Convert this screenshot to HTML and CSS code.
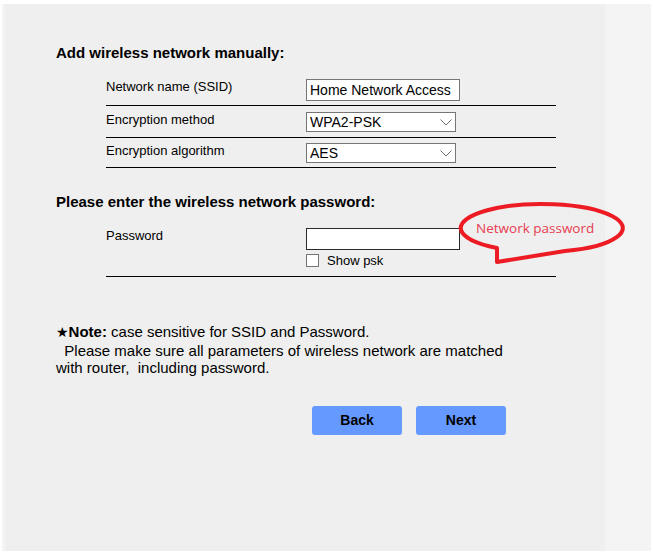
FILE: index.html
```html
<!DOCTYPE html>
<html>
<head>
<meta charset="utf-8">
<link rel="stylesheet" href="styles.css">
</head>
<body>
<div class="frame">
  <div class="main">
    <h1 class="title">Add wireless network manually:</h1>
    <div class="table">
      <div class="row r1">
        <div class="label">Network name (SSID)</div>
        <div class="ctrl"><input class="text" type="text" value="Home Network Access"></div>
      </div>
      <div class="row r2">
        <div class="label">Encryption method</div>
        <div class="ctrl"><select class="sel"><option>WPA2-PSK</option></select></div>
      </div>
      <div class="row r3">
        <div class="label">Encryption algorithm</div>
        <div class="ctrl"><select class="sel"><option>AES</option></select></div>
      </div>
    </div>
    <h2 class="title t2">Please enter the wireless network password:</h2>
    <div class="table">
      <div class="row r4">
        <div class="label">Password</div>
        <div class="ctrl stack">
          <input class="text dark" type="password">
          <label class="show"><input class="check" type="checkbox"><span>Show psk</span></label>
        </div>
      </div>
    </div>
    <svg class="callout" width="175" height="70" viewBox="0 0 175 70">
      <path d="M41 50 L41 64 L109 53 A81 24 0 1 0 41 50 Z" fill="none" stroke="#ed1c24" stroke-width="4" stroke-linejoin="round"/>
    </svg>
    <div class="callout-text">Network password</div>
    <p class="note"><span class="star">★</span><b>Note:</b> case sensitive for SSID and Password.<br>&nbsp;&nbsp;Please make sure all parameters of wireless network are matched<br>with router,&nbsp; including password.</p>
    <div class="buttons">
      <button class="btn">Back</button>
      <button class="btn">Next</button>
    </div>
  </div>
  <div class="side"></div>
</div>
</body>
</html>
```
FILE: styles.css
```css
html, body {
  margin: 0;
  padding: 0;
  background: #ffffff;
}
body {
  font-family: "Liberation Sans", Arial, sans-serif;
  color: #000;
}
.frame {
  display: flex;
  margin: 4px 2px 2px 2px;
  height: 547px;
}
.main {
  position: relative;
  flex: 1;
  background: #efefef;
  border-left: 3px solid #f4f4f4;
  padding: 40px 0 0 51px;
  box-sizing: border-box;
}
.side {
  width: 46px;
  background: #f4f4f4;
}
.title {
  margin: 0;
  font-size: 15px;
  line-height: 18px;
  font-weight: bold;
}
.t2 {
  margin-top: 25px;
}
.table {
  margin-left: 50px;
  width: 450px;
  margin-top: 17px;
}
.row {
  display: grid;
  grid-template-columns: 200px 1fr;
  border-bottom: 1px solid #000;
}
.r1 { padding: 0 0 4px; }
.r2 { padding: 6px 0 5px; }
.r3 { padding: 5px 0 4px; }
.r4 { padding: 0 0 8px; }
.t2 + .table { margin-top: 17px; }
.label {
  font-size: 13px;
  line-height: 15px;
  padding-top: 0;
}
.ctrl {
  display: flex;
}
.stack {
  flex-direction: column;
  align-items: flex-start;
}
.text {
  box-sizing: border-box;
  width: 154px;
  height: 22px;
  margin: 0;
  padding: 0 3px;
  border: 1px solid #767676;
  background: #fff;
  font-family: "Liberation Sans", Arial, sans-serif;
  font-size: 14px;
  color: #000;
  outline: none;
}
.dark {
  border-color: #2a2a2a;
}
.sel {
  box-sizing: border-box;
  width: 150px;
  height: 20px;
  margin: 0;
  padding: 0 0 0 3px;
  border: 1px solid #767676;
  border-radius: 0;
  background: #fff url("data:image/svg+xml,%3Csvg xmlns='http://www.w3.org/2000/svg' width='12' height='7'%3E%3Cpath d='M0.5 0.5 L6 6 L11.5 0.5' fill='none' stroke='%23707070' stroke-width='1'/%3E%3C/svg%3E") no-repeat right 3px center;
  -webkit-appearance: none;
  appearance: none;
  font-family: "Liberation Sans", Arial, sans-serif;
  font-size: 14px;
  line-height: 18px;
  color: #000;
}
.show {
  display: flex;
  align-items: center;
  margin-top: 3px;
  font-size: 13px;
  line-height: 15px;
}
.check {
  -webkit-appearance: none;
  appearance: none;
  box-sizing: border-box;
  width: 13px;
  height: 13px;
  margin: 0 8px 0 0;
  border: 1px solid #767676;
  background: #fff;
}
.callout {
  position: absolute;
  left: 451px;
  top: 194px;
}
.callout-text {
  position: absolute;
  left: 471px;
  top: 216px;
  font-family: "Open Sans", sans-serif;
  font-size: 13.5px;
  line-height: 17px;
  color: #e73c50;
}
.note {
  margin: 46px 0 0;
  font-size: 15px;
  line-height: 17.5px;
}
.star {
  font-family: "DejaVu Sans", sans-serif;
  font-size: 14px;
}
.buttons {
  display: flex;
  gap: 14px;
  margin: 29px 0 0 256px;
}
.btn {
  width: 90px;
  height: 29px;
  border: none;
  border-radius: 3px;
  background: #6699ff;
  font-family: "Liberation Sans", Arial, sans-serif;
  font-size: 14px;
  font-weight: bold;
  color: #000;
  padding: 0;
}
```
